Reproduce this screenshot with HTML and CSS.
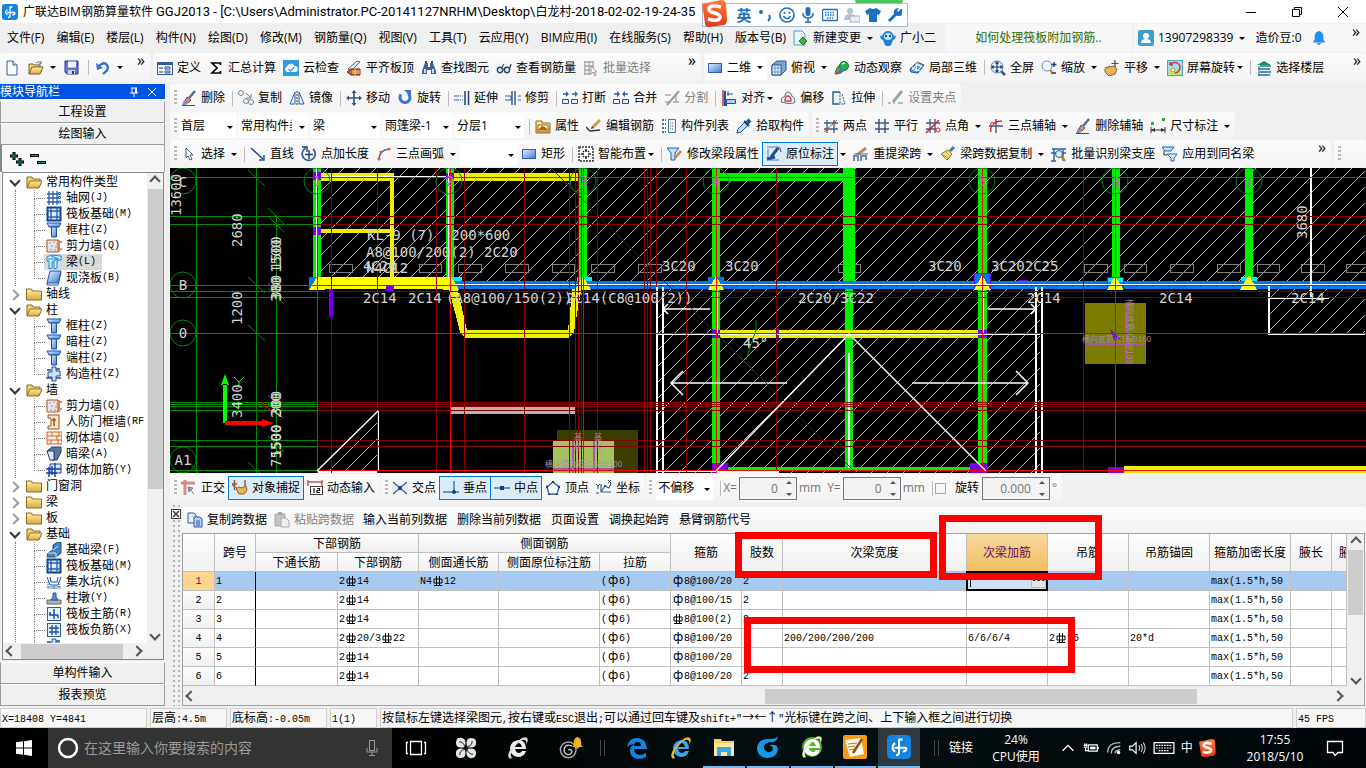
FILE: index.html
```html
<!DOCTYPE html>
<html lang="zh-CN">
<head>
<meta charset="utf-8">
<title>广联达BIM钢筋算量软件 GGJ2013</title>
<link rel="stylesheet" href="styles.css">
</head>
<body>
<svg class="defs" aria-hidden="true">
<defs>
<linearGradient id="g-blue" x1="0" y1="0" x2="1" y2="1"><stop offset="0" stop-color="#e4efff"/><stop offset="1" stop-color="#3f79d8"/></linearGradient>
<linearGradient id="g-gold" x1="0" y1="0" x2="0" y2="1"><stop offset="0" stop-color="#fff0b0"/><stop offset="1" stop-color="#e0a53a"/></linearGradient>
<linearGradient id="g-red" x1="0" y1="0" x2="0" y2="1"><stop offset="0" stop-color="#ff7a3c"/><stop offset="1" stop-color="#e23a14"/></linearGradient>
<symbol id="logo" viewBox="0 0 16 16"><rect width="16" height="16" rx="3" fill="#1583e0"/><path d="M8 2.500v9q0 2-2 2M8 3h2.500M13 8.500H5M5.500 5.500a3 3 0 0 0 0 5.500M13 8.500q0 2.500-2.500 2.500" fill="none" stroke="#fff" stroke-width="1.300"/></symbol>
<symbol id="i-new" viewBox="0 0 16 16"><path d="M3 1h6l4 4v10H3z" fill="#f8fbff" stroke="#3c5f94"/><path d="M9 1v4h4" fill="#cfe0f7" stroke="#3c5f94"/></symbol>
<symbol id="i-open" viewBox="0 0 16 16"><path d="M1 14V4h4l1 1h6v3" fill="#f6d676" stroke="#7a6024"/><path d="M1 14l3-7h11l-3 7z" fill="url(#g-gold)" stroke="#7a6024"/><path d="M8 3q3-3 5 0m0-2v3h-3" fill="none" stroke="#5577a0"/></symbol>
<symbol id="i-save" viewBox="0 0 16 16"><path d="M1 1h13v13H3l-2-2z" fill="#6a72d8" stroke="#30368f"/><rect x="4" y="1.500" width="8" height="6" fill="#f2f4ff"/><rect x="4" y="10" width="7" height="4" fill="#cfd3e4"/><rect x="8" y="11" width="2" height="3" fill="#30368f"/></symbol>
<symbol id="i-undo" viewBox="0 0 16 16"><path d="M4 6q5-5 8-1t-4 9" fill="none" stroke="#3f6fd0" stroke-width="2.500"/><path d="M1 3l1 7 6-2z" fill="#3f6fd0"/></symbol>
<symbol id="i-def" viewBox="0 0 16 16"><rect x=".5" y="2.500" width="15" height="12" fill="#f2f7ff" stroke="#2f5aa8"/><path d="M1 4h14" stroke="#2f5aa8" stroke-width="2"/><path d="M2 8h4M2 12h4" stroke="#333"/><path d="M8 7h5v2H8zM8 11h5v2H8z" fill="#bcd4f8" stroke="#2f5aa8"/></symbol>
<symbol id="i-sum" viewBox="0 0 16 16"><path d="M12.500 5V3H4l5 5-5 5h8.500v-2" fill="none" stroke="#000" stroke-width="1.700"/></symbol>
<symbol id="i-cloud" viewBox="0 0 16 16"><rect width="16" height="16" fill="#2d9be0"/><path d="M4 12a3 3 0 0 1 0-5.500A4 4 0 0 1 11.500 6 3 3 0 0 1 12 12z" fill="#fff"/><path d="M5.500 9l2 2 4-4" fill="none" stroke="#2d9be0" stroke-width="1.300"/></symbol>
<symbol id="i-top" viewBox="0 0 16 16"><path d="M2 9l9-8 3 1-8 8z" fill="#dfe9f8" stroke="#47648f"/><path d="M1 12l4-3h9v6H5z" fill="#c75a24" stroke="#7b2c10"/><path d="M6 11h8M6 13h8M9 9v6" stroke="#ffd48a"/></symbol>
<symbol id="i-bino" viewBox="0 0 16 16"><path d="M4 3h3v4h2V3h3l3 8v3h-5v-4H6v4H1v-3z" fill="#3f6290"/><path d="M4 1h2v2H4zM10 1h2v2h-2z" fill="#274468"/><path d="M3 9h2v4H3zM11 9h2v4h-2z" fill="#c5daf3"/></symbol>
<symbol id="i-glass" viewBox="0 0 16 16"><circle cx="4" cy="10" r="2.700" fill="#d5e4f2" stroke="#33435c" stroke-width="1.400"/><circle cx="11" cy="10" r="2.700" fill="#d5e4f2" stroke="#33435c" stroke-width="1.400"/><path d="M6.500 9h2M13.500 9l1.500-5M6 7l2-3" stroke="#33435c" stroke-width="1.200"/></symbol>
<symbol id="i-batch" viewBox="0 0 16 16"><path d="M1 2h10M1 6h10M1 10h7M1 14h7M2 1v14M6 1v14M10 1v7" stroke="#a8a8a8" stroke-width="1.300"/><path d="M8 6l6 6h-3l2 3-1 1-2-4-2 2z" fill="#fff" stroke="#9a9a9a"/></symbol>
<symbol id="i-rect" viewBox="0 0 16 16"><rect x="1.500" y="3.500" width="13" height="9" fill="url(#g-blue)" stroke="#2f5db2"/></symbol>
<symbol id="i-cube" viewBox="0 0 16 16"><path d="M1 5l5-4h9v9l-5 5H1z" fill="#7aa9d8" stroke="#2f5580"/><path d="M1 5h9v10H1z" fill="#e6f1fc" stroke="#2f5580"/><path d="M10 5l5-4M4 5v10M7 5v10M1 8h9M1 12h9" stroke="#6f98c4"/></symbol>
<symbol id="i-orbit" viewBox="0 0 16 16"><path d="M1 14Q2 6 9 3l3 6Q7 14 1 14z" fill="#6aa04a" stroke="#2f6f2a"/><circle cx="10" cy="6" r="4.500" fill="#22b04a" stroke="#187030"/><path d="M8 4l3-1" stroke="#d8ffd8" stroke-width="1.500"/><path d="M2 14l5-6 4 2-5 4z" fill="#4a73c0"/><circle cx="3" cy="13" r="1.500" fill="#d84422"/></symbol>
<symbol id="i-part" viewBox="0 0 16 16"><path d="M1 9l7-7 7 3-6 8-7-1z" fill="#5c9ac8" stroke="#1f5580"/><path d="M3 9l6-5 4 2-5 5zM8 2l-1 9M3 7l8 4M6 4l7 3" fill="none" stroke="#e8f4ff"/></symbol>
<symbol id="i-full" viewBox="0 0 16 16"><path d="M11 11l4 4" stroke="#2f5580" stroke-width="2.500"/><circle cx="7" cy="7" r="6" fill="#e8f2ff" stroke="#55779f"/><path d="M7 2v10M2 7h10M5.500 3.500L7 2l1.500 1.500M5.500 10.500L7 12l1.500-1.500M3.500 5.500L2 7l1.500 1.500M10.500 5.500L12 7l-1.500 1.500" fill="none" stroke="#16417a" stroke-width="1.200"/></symbol>
<symbol id="i-zoom" viewBox="0 0 16 16"><path d="M9 10l3 4" stroke="#c08a3a" stroke-width="2.500"/><circle cx="6" cy="6" r="5" fill="#eef6ff" stroke="#708caf"/><path d="M13 2v5M10.500 4.500h5M11 13h4" stroke="#16417a" stroke-width="1.400"/></symbol>
<symbol id="i-pan" viewBox="0 0 16 16"><path d="M1 9l1-2 2 1 1-2 2 1 1-1 3 1 2 2-2 5-6 2-4-4z" fill="#e3b45b" stroke="#8d6420"/><path d="M11 0v7M7.500 3.500h7" stroke="#34506f" stroke-width="1.200"/></symbol>
<symbol id="i-rots" viewBox="0 0 16 16"><rect x=".5" y=".5" width="15" height="15" fill="#9fe0f4" stroke="#4aa4cc"/><path d="M1 9l7 1 7-2v7H1z" fill="#bde28a"/><path d="M3 5a5.500 5.500 0 0 1 10 2 5.500 5.500 0 0 1-5 6M3 5V2M3 5h3" fill="none" stroke="#d83030" stroke-width="1.500"/><circle cx="6" cy="10" r="2" fill="#fff3c0" stroke="#c89a3c"/></symbol>
<symbol id="i-floor" viewBox="0 0 16 16"><path d="M1 5l7-4 7 4z" fill="#1d8b62"/><path d="M4 6h11M2 9h12M4 12h11M2 15h12" stroke="#24719b" stroke-width="1.700"/><path d="M3 6v10" stroke="#24719b"/></symbol>
<symbol id="i-brush" viewBox="0 0 16 16"><path d="M14 1L8 8" stroke="#4d6ba0" stroke-width="2.500"/><path d="M6 7l4 3-3 3-3-2z" fill="#e08a7a" stroke="#7d4a44"/><path d="M3 10l4 3-2 2H1z" fill="#7d96c4"/><path d="M1 15.500h13" stroke="#33527f"/></symbol>
<symbol id="i-copy" viewBox="0 0 16 16"><circle cx="3" cy="3" r="2.500" fill="#fff" stroke="#6d7d95"/><circle cx="8" cy="11" r="2.500" fill="#fff" stroke="#6d7d95"/><circle cx="13" cy="12" r="2.500" fill="#fff" stroke="#6d7d95"/><path d="M8 3l5 5M13 4v4H9" fill="none" stroke="#6d7d95"/></symbol>
<symbol id="i-mirror" viewBox="0 0 16 16"><path d="M6 2v12H1zM10 2v12h5z" fill="#e8f1ff" stroke="#2f5db2"/><path d="M8 1v14" stroke="#333" stroke-dasharray="2 1"/></symbol>
<symbol id="i-move" viewBox="0 0 16 16"><path d="M8 2v12M2 8h12" stroke="#35507e" stroke-width="1.600"/><path d="M8 0l2.500 3h-5zM8 16l2.500-3h-5zM0 8l3-2.500v5zM16 8l-3-2.500v5z" fill="#35507e"/></symbol>
<symbol id="i-rot" viewBox="0 0 16 16"><path d="M4 4.500a5 5 0 1 0 7-1" fill="none" stroke="#3f74cc" stroke-width="3"/><path d="M7 0h7v7z" fill="#3f74cc"/></symbol>
<symbol id="i-ext" viewBox="0 0 16 16"><path d="M0 6h9M0 10h9" stroke="#2f62b8" stroke-dasharray="5 1 1 1"/><path d="M11 1v14M14.500 1v14" stroke="#1f3f74" stroke-width="1.500"/></symbol>
<symbol id="i-trim" viewBox="0 0 16 16"><path d="M0 6h6v4H0M16 6h-3M16 10h-3" fill="none" stroke="#2f62b8"/><path d="M7 1v14M10 1v14" stroke="#35507e" stroke-width="1.400"/></symbol>
<symbol id="i-break" viewBox="0 0 16 16"><path d="M1 4h5M10 4h5" stroke="#2f5db2" stroke-width="1.500"/><path d="M7 4L4 1v6zM16 4l-3-3v6z" fill="#2f5db2"/><path d="M.500 9.500h6v4h-6zM9.500 9.500h6v4h-6z" fill="#e4edf9" stroke="#35507e"/></symbol>
<symbol id="i-join" viewBox="0 0 16 16"><path d="M1 4h4M11 4h4" stroke="#2f5db2" stroke-width="1.500"/><path d="M7 4L4 1v6zM9 4l3-3v6z" fill="#2f5db2"/><path d="M.500 9.500h6v4h-6zM9.500 9.500h6v4h-6z" fill="#e4edf9" stroke="#35507e"/></symbol>
<symbol id="i-split" viewBox="0 0 16 16"><path d="M1 5h6M1 12h5M9 12h6M12 5v7" fill="none" stroke="#aaa" stroke-width="1.400"/><path d="M3 15L15 1" stroke="#999" stroke-width="2"/></symbol>
<symbol id="i-align" viewBox="0 0 16 16"><path d="M2 0v16" stroke="#d03030" stroke-width="1.500"/><path d="M4 1v14h2" fill="none" stroke="#1f4f9c" stroke-width="2"/><path d="M6 4h6M7 1v5" stroke="#1f4f9c"/><path d="M5.500 9.500h9v4h-9z" fill="#aecaf5" stroke="#1f4f9c"/></symbol>
<symbol id="i-off" viewBox="0 0 16 16"><path d="M1 12q0-5 4-6 0-4 3-4t4 4q3 2 3 6-3 3-14 0z" fill="#eef3fa" stroke="#5c6f88"/><path d="M5 11q0-5 3-5t3 5z" fill="#fff" stroke="#d84040" stroke-width="1.400"/></symbol>
<symbol id="i-str" viewBox="0 0 16 16"><path d="M9 2H2v12h6" fill="#eaf2ff" stroke="#2f5580" stroke-width="1.400"/><path d="M9 2v12M11 4l3 10H8" fill="none" stroke="#2f5580" stroke-dasharray="2 1"/></symbol>
<symbol id="i-grip" viewBox="0 0 16 16"><path d="M0 13h3M5 13h2M10 13h5" stroke="#aaa" stroke-width="1.500"/><path d="M5 12L14 1" stroke="#a3a3a3" stroke-width="3"/></symbol>
<symbol id="i-prop" viewBox="0 0 16 16"><path d="M1 3h6v2h8v10H1z" fill="url(#g-gold)" stroke="#9d681c"/><path d="M3 7h10v6H3z" fill="#fff8e0" stroke="#9d681c"/><path d="M3 12l4-4 3 1 3 3" fill="#a56422"/></symbol>
<symbol id="i-edit" viewBox="0 0 16 16"><path d="M7 9L14 2" stroke="#d29b4c" stroke-width="3"/><path d="M0 9l4 4 10-1" fill="none" stroke="#333" stroke-width="1.300"/><path d="M5 11l1-3 2 2z" fill="#333"/></symbol>
<symbol id="i-list" viewBox="0 0 16 16"><path d="M1 2h4M1 6h4M1 10h4M1 14h4" stroke="#556f96" stroke-width="2" stroke-dasharray="2 1"/><path d="M7.500 1.500h7v13h-7z" fill="#f2f7ff" stroke="#556f96"/><path d="M9 5h4M9 8h4M9 11h4" stroke="#2f5db2" stroke-dasharray="1 1"/></symbol>
<symbol id="i-pick" viewBox="0 0 16 16"><path d="M1 15l1-4 7-7 3 3-7 7z" fill="#bfe0fb" stroke="#23558f"/><path d="M8 3l5 5" stroke="#0e3a70" stroke-width="2"/><path d="M11 5l3-3" stroke="#1f5aa8" stroke-width="4"/></symbol>
<symbol id="i-two" viewBox="0 0 16 16"><path d="M4 2v13M11 2v13M1 5h14M1 11h14" stroke="#3f5688" stroke-width="1.300"/><path d="M1 14L14 2" stroke="#2a9a3a"/><circle cx="4" cy="11" r="1.500" fill="#d33"/><circle cx="11" cy="5" r="1.500" fill="#d33"/></symbol>
<symbol id="i-par" viewBox="0 0 16 16"><path d="M5 1v14M11 1v14M1 5h14M1 11h14" stroke="#3f5688" stroke-width="1.500"/></symbol>
<symbol id="i-ang" viewBox="0 0 16 16"><path d="M5 1v14M10 1v14M1 5h14M1 11h10" stroke="#3f5688" stroke-width="1.300"/><path d="M1 15L14 2" stroke="#d22" stroke-width="1.400"/><circle cx="13" cy="12" r="2" fill="none" stroke="#d22"/></symbol>
<symbol id="i-arc" viewBox="0 0 16 16"><path d="M8 1v14M1 8h14" stroke="#3f5688" stroke-width="1.400"/><path d="M3 14Q1 4 14 3" fill="none" stroke="#d22" stroke-width="1.400"/><circle cx="4" cy="6" r="1.500" fill="#fff" stroke="#d22"/></symbol>
<symbol id="i-dim" viewBox="0 0 16 16"><path d="M1 9v6M15 9v6M1 12h14" stroke="#333"/><path d="M5 10v4l-4-2zM11 10v4l4-2z" fill="#333"/><rect x="1" y="4" width="3" height="3" fill="#2ea84a"/><rect x="12" y="0" width="3" height="3" fill="#2ea84a"/></symbol>
<symbol id="i-sel" viewBox="0 0 16 16"><path d="M5 2v10l2-2 2 4 2-1-2-4h3z" fill="#fff" stroke="#45607f"/></symbol>
<symbol id="i-line" viewBox="0 0 16 16"><path d="M1 2l12 11" stroke="#23518f" stroke-width="1.600"/><path d="M14 9v5H9" fill="none" stroke="#23518f" stroke-width="1.400"/></symbol>
<symbol id="i-ptlen" viewBox="0 0 16 16"><path d="M5 2a6.500 6.500 0 1 0 7 1" fill="none" stroke="#3f5f90" stroke-width="1.800"/><path d="M8 4v9M4 8.500h8M1 1h5v5" fill="none" stroke="#1f3f6f" stroke-width="1.400"/></symbol>
<symbol id="i-arc3" viewBox="0 0 16 16"><path d="M3 14Q3 4 13 3" fill="none" stroke="#2f6dc0" stroke-width="1.500"/><circle cx="3" cy="13" r="1.600" fill="#e55c3a"/><circle cx="5" cy="6" r="1.600" fill="#e55c3a"/><circle cx="13" cy="3" r="1.600" fill="#e55c3a"/></symbol>
<symbol id="i-smart" viewBox="0 0 16 16"><rect x="1" y="1" width="14" height="14" fill="#fff" stroke="#333" stroke-width="1.500" stroke-dasharray="2 1"/><path d="M8 3v3M8 10v3M3 8h3M10 8h3M5 5l1 1M11 5l-1 1M5 11l1-1M11 11l-1-1" stroke="#222" stroke-width="1.600"/></symbol>
<symbol id="i-seg" viewBox="0 0 16 16"><path d="M0 2h12l-4 5v7H4V7z" fill="#bfe2ff" stroke="#1c62b4"/><path d="M8 12l6-7" stroke="#c98a3c" stroke-width="2.600"/></symbol>
<symbol id="i-mark" viewBox="0 0 16 16"><path d="M1 1h12M2 3v11h11" fill="none" stroke="#98b4dd" stroke-width="2"/><path d="M1 13l8-2M5 11l7-9" stroke="#244f91" stroke-width="3"/><path d="M12 2h2l1 4" fill="none" stroke="#244f91"/></symbol>
<symbol id="i-redo" viewBox="0 0 16 16"><path d="M1 15v-5h4v5M8 15v-5h5v4" fill="none" stroke="#708bb4" stroke-width="2"/><path d="M4 9l9-7" stroke="#c0905a" stroke-width="3"/><path d="M1 8h14" stroke="#4d6a93"/></symbol>
<symbol id="i-paint" viewBox="0 0 16 16"><path d="M10 5l4-4" stroke="#5374a5" stroke-width="3"/><path d="M1 8l7-4 4 4-5 6z" fill="#f6e28b" stroke="#8a7425"/><path d="M3 9l5 3M6 6l4 4" stroke="#b9972f"/></symbol>
<symbol id="i-ident" viewBox="0 0 16 16"><path d="M1 3h14M0 7h15M3 3v12M12 3v12M0 15h5" stroke="#2e609d" stroke-width="1.400"/><path d="M10 10l4 5" stroke="#b98339" stroke-width="2.500"/><circle cx="8" cy="8" r="3.500" fill="#d9ecff" stroke="#335c8b"/></symbol>
<symbol id="i-apply" viewBox="0 0 16 16"><path d="M0 1h12l-3 4H3z" fill="#bfe2ff" stroke="#1c62b4"/><path d="M5 8h10l-3 4v3H9v-3z" fill="#eaf4ff" stroke="#1c62b4"/><path d="M2 5v4h3" fill="none" stroke="#333"/></symbol>
<symbol id="i-ortho" viewBox="0 0 16 16"><path d="M0 3h14M4 0v15" stroke="#d98a84" stroke-width="3"/><path d="M7 7l6 7M7 7l1 5 4-4z" fill="#9fb4cc" stroke="#6d7f94"/></symbol>
<symbol id="i-snap" viewBox="0 0 16 16"><path d="M0 4h5M2.500 0v10M13 0v8" stroke="#9d4a44" stroke-width="1.400"/><path d="M4 9l3-2 3 1 4-2 1 4-3 4H7z" fill="#e8b654" stroke="#8d6420"/><path d="M0 5l5 3" stroke="#9d4a44"/></symbol>
<symbol id="i-dyn" viewBox="0 0 16 16"><path d="M0 2h16M1 0v6M15 0v6" stroke="#b05a55" stroke-width="1.300"/><rect x="3.500" y="6.500" width="12" height="8" fill="#fff" stroke="#444"/><path d="M7 8v5M10 8.500h2.500v2H10v2h3" fill="none" stroke="#111" stroke-width="1.200"/></symbol>
<symbol id="i-x" viewBox="0 0 16 16"><path d="M1 2l14 12M15 2L1 14" stroke="#2f6099" stroke-width="1.300"/><circle cx="8" cy="8" r="2" fill="#153e86"/></symbol>
<symbol id="i-perp" viewBox="0 0 16 16"><path d="M11 1v11M0 12h16" stroke="#3b78b8" stroke-width="1.500"/><circle cx="11" cy="12" r="2" fill="#153e86"/></symbol>
<symbol id="i-mid" viewBox="0 0 16 16"><path d="M0 8h16" stroke="#3b78b8" stroke-width="1.500"/><rect x="6" y="6" width="4" height="4" fill="#153e86"/></symbol>
<symbol id="i-vert" viewBox="0 0 16 16"><path d="M8 2l6 5-2 7H4L2 7z" fill="#fff" stroke="#2f6099" stroke-width="1.300"/><path d="M8 1v2M13 7h2M1 7h2M4 14v1M12 14v1" stroke="#153e86" stroke-width="2.500"/></symbol>
<symbol id="i-coord" viewBox="0 0 16 16"><path d="M5 4v8h10M5 12l4-6 4 2 2-5" fill="none" stroke="#2f6099" stroke-width="1.200"/><path d="M0 4l2 2 2-2M2 6v3M12 0l3 3M15 0l-3 3M0 13h3" fill="none" stroke="#345"/><circle cx="9" cy="6" r="1" fill="#153e86"/></symbol>
<symbol id="i-pages" viewBox="0 0 16 16"><path d="M1 1h6l2 2v8H1z" fill="#e4eefc" stroke="#2f5aa8"/><path d="M7 5h6l2 2v8H7z" fill="#b9d2f6" stroke="#2f5aa8"/><path d="M9 9h4M9 11h4M9 13h4" stroke="#2f5aa8"/></symbol>
<symbol id="i-paste" viewBox="0 0 16 16"><path d="M1 2h10v12H1z" fill="#c4c4c4" stroke="#aaa"/><path d="M4 0h4v3H4z" fill="#a5a5a5"/><path d="M7 6h5l3 3v6H7z" fill="#eee" stroke="#aaa"/></symbol>
<symbol id="i-doc" viewBox="0 0 16 16"><path d="M1 1h8l3 3v11H1z" fill="#eaf6ff" stroke="#4a9aca"/><path d="M10 7l4 4-4 4-4-4z" fill="#3fae3c" stroke="#237a28"/></symbol>
<symbol id="i-mascot" viewBox="0 0 16 16"><path d="M2 6q-3-1-1 3l2 1q1 4 3 6h4q2-2 3-6l2-1q2-4-1-3Q12 1 8 1T2 6z" fill="#1b87d8"/><path d="M4 6q1-3 4-3t4 3q0 4-4 4T4 6z" fill="#bfe8ff"/><circle cx="6" cy="6" r="1" fill="#123"/><circle cx="10" cy="6" r="1" fill="#123"/></symbol>
<symbol id="i-user" viewBox="0 0 16 16"><rect width="16" height="16" rx="2" fill="#3d9fd2"/><circle cx="8" cy="6" r="3" fill="#fff"/><path d="M3 13q0-4 5-4t5 4z" fill="#fff"/></symbol>
<symbol id="i-bell" viewBox="0 0 16 16"><path d="M8 0q5 1 5 7v3l2 3H1l2-3V7q0-6 5-7z" fill="#1e8fff"/><path d="M5 14h6l-3 2z" fill="#1e6fd0"/></symbol>
<symbol id="t-fo" viewBox="0 0 16 16"><path d="M1 14V3h5l1 2h7v3" fill="#f7d36c" stroke="#8a6d1c"/><path d="M1 14l3-7h12l-3 7z" fill="url(#g-gold)" stroke="#8a6d1c"/></symbol>
<symbol id="t-fc" viewBox="0 0 16 16"><path d="M.500 3h5l1 2h9v9H.5z" fill="url(#g-gold)" stroke="#8a6d1c"/></symbol>
<symbol id="t-grid" viewBox="0 0 16 16"><path d="M3 1v14M7 1v14M11 1v14M1 4h12M1 8h12M1 12h12" stroke="#2c5cae" stroke-width="1.300"/><path d="M12.500 2.500h2v2h-2zM12.500 6.500h2v2h-2zM12.500 11h2v2h-2z" fill="#fff" stroke="#2c5cae"/></symbol>
<symbol id="t-raft" viewBox="0 0 16 16"><rect x="1.500" y="1.500" width="13" height="13" fill="#dcebff" stroke="#123f80" stroke-width="2"/><path d="M5 1v14M11 1v14M1 5h14M1 11h14" stroke="#2860b0" stroke-width="1.400"/></symbol>
<symbol id="t-col" viewBox="0 0 16 16"><path d="M1 1h14l-2 4H3z" fill="url(#g-blue)" stroke="#194f9c"/><path d="M5.500 5h5v10h-5z" fill="url(#g-blue)" stroke="#194f9c"/></symbol>
<symbol id="t-wall" viewBox="0 0 16 16"><path d="M1 2h11v12H1z" fill="#e7e3df" stroke="#a55430"/><path d="M3 5h2M7 4h2M5 8h2M9 9h2M4 12h2M8 12h2M10 6h1" stroke="#99a"/><path d="M13 2v12M14 4h2M14 11h2" stroke="#d06a28" stroke-width="1.500"/></symbol>
<symbol id="t-beam" viewBox="0 0 16 16"><path d="M1 3l4-2 10 1v4l-4 1v7l-3 1V8H6v6l-3 1V7H1z" fill="#d7efff" stroke="#1688d0"/><path d="M2 5l10 0M5 2l8 3M6 8l6-3" stroke="#1688d0"/></symbol>
<symbol id="t-slab" viewBox="0 0 16 16"><path d="M4 1h11l-3 12H1z" fill="url(#g-blue)" stroke="#23569c"/><path d="M1 13v2h11l3-12" fill="none" stroke="#23569c"/></symbol>
<symbol id="t-ctor" viewBox="0 0 16 16"><path d="M6 1h4v4h4v5h-4v5H6v-4H2V6h4z" fill="#cfe1fa" stroke="#1c4f96"/><path d="M1 4h4M10 3h4M0 12h6M10 12h5" stroke="#1c4f96" stroke-width="1.500"/></symbol>
<symbol id="t-door" viewBox="0 0 16 16"><path d="M2 1h11v14H2v-3h3V4H2z" fill="#ffe8d0" stroke="#a84a18"/><path d="M8 4v8M6 6h4" stroke="#a84a18" stroke-width="1.500"/></symbol>
<symbol id="t-brick" viewBox="0 0 16 16"><path d="M1 2h15v12H1z" fill="#fff0e0" stroke="#d2642c"/><path d="M1 6h15M1 10h15M6 2v4M11 6v4M5 10v4M12 10v4M13 2v4" stroke="#d2642c"/></symbol>
<symbol id="t-hid" viewBox="0 0 16 16"><path d="M1 5l5-4h9v5l-4 8H5z" fill="#55779f" stroke="#203f6f"/><path d="M1 5h7v9H4z" fill="#dfeaff" stroke="#203f6f"/></symbol>
<symbol id="t-reb" viewBox="0 0 16 16"><path d="M4 2h11v9H4z" fill="#e3ecff" stroke="#163f9c"/><path d="M0 7h15M0 11h11M3 5v10M9 1v14M6 4v9" stroke="#163f9c" stroke-width="1.400"/></symbol>
<symbol id="t-fbeam" viewBox="0 0 16 16"><path d="M2 11l5-3V3l5-3h3v11l-5 4H1z" fill="#3e83bd" stroke="#184f7f"/><path d="M7 8l5-4M2 11h8v4" stroke="#d3ecff" fill="none"/></symbol>
<symbol id="t-pit" viewBox="0 0 16 16"><path d="M1 3l3 8h8l3-8M4 3l1 5h6l1-5" fill="none" stroke="#174f9c"/><path d="M1 12h14v3H1z" fill="#a8c3df"/><path d="M2 8v6M8 12v3M13 8v6" stroke="#174f9c" stroke-dasharray="1 1"/></symbol>
<symbol id="t-pier" viewBox="0 0 16 16"><path d="M1 10h14v4H1z" fill="#b5b5b5" stroke="#666"/><path d="M5 10l2-3V3h3v4l2 3z" fill="#4f93dd" stroke="#23569c"/></symbol>
<symbol id="t-bar" viewBox="0 0 16 16"><rect x="1.500" y="1.500" width="13" height="13" fill="#e6f1ff" stroke="#2860b0"/><path d="M3 9h9M8 3v10M4 6v3M12 9v3" stroke="#174f9c" stroke-width="1.500"/></symbol>
<symbol id="t-bar2" viewBox="0 0 16 16"><rect x="1.500" y="1.500" width="13" height="13" fill="#e6f1ff" stroke="#2860b0"/><path d="M3 6h10M3 10h10M6 3v10M10 3v10" stroke="#174f9c" stroke-width="1.300"/></symbol>
<symbol id="k-rib" viewBox="0 0 12 12"><path d="M2 4h8v4H2zM4.500 1v10M7.500 1v10" fill="none" stroke="#000"/><path d="M2 10.500h8" stroke="#000"/></symbol>
<symbol id="k-edge" viewBox="0 0 24 24"><path d="M2 11Q4 2 12 2q9 0 10 11H9q0 5 5 6 3 0 7-2v4q-4 2-8 2-8-1-8-9 0-4 5-6-5 0-8 3zM9 10h7q0-4-3.500-4T9 10z" fill="#1583e0"/></symbol>
<symbol id="k-ie" viewBox="0 0 24 24"><path d="M12 4q8 0 8 9H9q1 4 4 4 2 0 3-2h4q-2 6-8 6-8-1-8-9 1-7 8-8zM9 11h7q-1-4-4-4-2 1-3 4z" fill="currentColor"/><path d="M3 22Q0 18 8 9 17-1 21 2q2 2-1 7 1-4-1-5-3-1-8 4Q2 17 6 22q-2 1-3 0z" fill="var(--ring)"/></symbol>
</defs>
</svg>

<header class="titlebar">
  <svg class="ic"><use href="#logo"/></svg>
  <h1>广联达BIM钢筋算量软件 <span>GGJ2013 - [C:\Users\Administrator.PC-20141127NRHM\Desktop\</span>白龙村<span>-2018-02-02-19-24-35</span></h1>
  <div class="winctl">
    <button aria-label="最小化"><svg viewBox="0 0 12 12"><path d="M1 6.500h10" stroke="#000"/></svg></button>
    <button aria-label="还原"><svg viewBox="0 0 12 12"><path d="M1.500 3.500h7v7h-7zM3.500 3V1.500h7v7H9" fill="none" stroke="#000"/></svg></button>
    <button aria-label="关闭"><svg viewBox="0 0 12 12"><path d="M1 1l10 10M11 1L1 11" stroke="#000"/></svg></button>
  </div>
  <div class="orb"></div>
  <div class="ime">
    <svg class="sogou" viewBox="0 0 26 27"><path d="M1 4l19-4q4 0 5 3l1 17q0 4-3 5L8 27q-4 0-4-4z" fill="url(#g-red)"/><path d="M20 7q-11-3-12 2 0 3 6 4 6 2 5 5-2 4-12 1" fill="none" stroke="#fff" stroke-width="3.500"/></svg>
    <b>英</b>
    <svg viewBox="0 0 16 16"><circle cx="4" cy="5" r="2" fill="#2b6cb8"/><path d="M12 8q2 3-1 6" fill="none" stroke="#2b6cb8" stroke-width="2"/></svg>
    <svg viewBox="0 0 16 16"><circle cx="8" cy="8" r="7" fill="none" stroke="#1f6fc0" stroke-width="1.600"/><path d="M4.500 9q3.500 5 7 0" fill="none" stroke="#1f6fc0" stroke-width="1.500"/><circle cx="5.500" cy="6" r="1" fill="#1f6fc0"/><circle cx="10.500" cy="6" r="1" fill="#1f6fc0"/></svg>
    <svg viewBox="0 0 16 16"><rect x="5.500" y="0" width="5" height="9" rx="2.500" fill="#1f6fc0"/><path d="M3 6q0 5 5 5t5-5M8 11v4M5 15h6" fill="none" stroke="#1f6fc0" stroke-width="1.500"/></svg>
    <svg viewBox="0 0 16 16"><rect x=".5" y="2.500" width="15" height="11" rx="1" fill="none" stroke="#1f6fc0" stroke-width="1.400"/><path d="M3 5.500h10M3 8h10M5 11h6" stroke="#1f6fc0" stroke-width="1.400" stroke-dasharray="1.500 1"/></svg>
    <svg viewBox="0 0 16 16"><circle cx="6" cy="4" r="3" fill="#b6c2d2"/><path d="M0 13q0-6 6-6 4 0 5 2v4z" fill="#b6c2d2"/><rect x="6" y="9" width="10" height="6" fill="#e9eef5" stroke="#a4b2c6"/></svg>
    <svg viewBox="0 0 16 16"><path d="M5 1q3 2 6 0l5 3-2 4-2-1v8H4V7L2 8 0 4z" fill="#1f6fc0"/></svg>
    <svg viewBox="0 0 16 16"><path d="M2 14l7-7" stroke="#1f6fc0" stroke-width="3"/><path d="M14 2l-3 3-1-1 2-3q-4 0-5 3t1 4 5 1 2-7z" fill="#1f6fc0"/></svg>
  </div>
</header>

<nav class="menubar">
  <div class="menus">
    <button>文件(F)</button><button>编辑(E)</button><button>楼层(L)</button><button>构件(N)</button><button>绘图(D)</button><button>修改(M)</button><button>钢筋量(Q)</button><button>视图(V)</button><button>工具(T)</button><button>云应用(Y)</button><button>BIM应用(I)</button><button>在线服务(S)</button><button>帮助(H)</button><button>版本号(B)</button>
  </div>
  <div class="extras">
    <button class="tb drop"><svg class="ic"><use href="#i-doc"/></svg>新建变更</button>
    <button class="tb"><svg class="ic"><use href="#i-mascot"/></svg>广小二</button>
  </div>
  <a class="tip" href="#">如何处理筏板附加钢筋..</a>
  <div class="account">
    <button class="tb drop"><svg class="ic"><use href="#i-user"/></svg>13907298339</button>
    <span>造价豆:0</span>
    <button aria-label="通知"><svg class="bell"><use href="#i-bell"/></svg></button>
    <button class="more" aria-label="更多">»</button>
  </div>
</nav>

<div class="toolrow first">
  <div class="bar file">
    <button aria-label="新建"><svg class="ic"><use href="#i-new"/></svg></button>
    <button class="drop" aria-label="打开"><svg class="ic"><use href="#i-open"/></svg></button>
    <button aria-label="保存"><svg class="ic"><use href="#i-save"/></svg></button>
    <i class="sep"></i>
    <button class="drop" aria-label="撤销"><svg class="ic"><use href="#i-undo"/></svg></button>
    <button class="more" aria-label="更多">»</button>
  </div>
  <div class="bar calc">
    <button class="tb"><svg class="ic"><use href="#i-def"/></svg>定义</button>
    <button class="tb"><svg class="ic"><use href="#i-sum"/></svg>汇总计算</button>
    <button class="tb"><svg class="ic"><use href="#i-cloud"/></svg>云检查</button>
    <button class="tb"><svg class="ic"><use href="#i-top"/></svg>平齐板顶</button>
    <button class="tb"><svg class="ic"><use href="#i-bino"/></svg>查找图元</button>
    <button class="tb"><svg class="ic"><use href="#i-glass"/></svg>查看钢筋量</button>
    <button class="tb off" disabled><svg class="ic"><use href="#i-batch"/></svg>批量选择</button>
    <button class="more" aria-label="更多">»</button>
  </div>
  <div class="bar view">
    <button class="tb drop white"><svg class="ic"><use href="#i-rect"/></svg>二维</button>
    <button class="tb drop"><svg class="ic"><use href="#i-cube"/></svg>俯视</button>
    <button class="tb"><svg class="ic"><use href="#i-orbit"/></svg>动态观察</button>
    <button class="tb"><svg class="ic"><use href="#i-part"/></svg>局部三维</button>
    <i class="sep"></i>
    <button class="tb"><svg class="ic"><use href="#i-full"/></svg>全屏</button>
    <button class="tb drop"><svg class="ic"><use href="#i-zoom"/></svg>缩放</button>
    <button class="tb drop"><svg class="ic"><use href="#i-pan"/></svg>平移</button>
    <button class="tb drop tight"><svg class="ic"><use href="#i-rots"/></svg>屏幕旋转</button>
    <i class="sep"></i>
    <button class="tb"><svg class="ic"><use href="#i-floor"/></svg>选择楼层</button>
    <button class="more" aria-label="更多">»</button>
  </div>
</div>

<main class="main">
<aside class="side">
  <div class="side-title"><span>模块导航栏</span>
    <button aria-label="固定"><svg viewBox="0 0 10 10"><path d="M2 1h6M3 1v5M6.500 1v5M7.500 1v5M1 6h8M5 6v4" stroke="#fff" fill="none"/></svg></button>
    <button aria-label="关闭"><svg viewBox="0 0 10 10"><path d="M1 1l8 8M9 1L1 9" stroke="#fff"/></svg></button>
  </div>
  <button class="side-btn">工程设置</button>
  <button class="side-btn">绘图输入</button>
  <div class="side-tools">
    <button aria-label="全部展开"><svg viewBox="0 0 18 18"><path d="M6 2v8M2 6h8M12 8v8M8 12h8" stroke="#000" stroke-width="3"/><path d="M6 3v6M3 6h6M12 9v6M9 12h6" stroke="#0a9a86"/></svg></button>
    <button aria-label="全部折叠"><svg viewBox="0 0 18 18"><path d="M1 5.500h9M8 12.500h9" stroke="#000" stroke-width="3"/><path d="M2 5.500h7M9 12.500h7" stroke="#0a9a86"/></svg></button>
  </div>
  <div class="tree">
    <div class="tree-main">
    <ul class="roots">
      <li><div class="node open"><svg class="ic"><use href="#t-fo"/></svg>常用构件类型</div>
        <ul>
          <li><svg class="ic"><use href="#t-grid"/></svg>轴网<s>(J)</s></li>
          <li><svg class="ic"><use href="#t-raft"/></svg>筏板基础<s>(M)</s></li>
          <li><svg class="ic"><use href="#t-col"/></svg>框柱<s>(Z)</s></li>
          <li><svg class="ic"><use href="#t-wall"/></svg>剪力墙<s>(Q)</s></li>
          <li class="on"><svg class="ic"><use href="#t-beam"/></svg>梁<s>(L)</s></li>
          <li><svg class="ic"><use href="#t-slab"/></svg>现浇板<s>(B)</s></li>
        </ul></li>
      <li><div class="node"><svg class="ic"><use href="#t-fc"/></svg>轴线</div></li>
      <li><div class="node open"><svg class="ic"><use href="#t-fo"/></svg>柱</div>
        <ul>
          <li><svg class="ic"><use href="#t-col"/></svg>框柱<s>(Z)</s></li>
          <li><svg class="ic"><use href="#t-col"/></svg>暗柱<s>(Z)</s></li>
          <li><svg class="ic"><use href="#t-col"/></svg>端柱<s>(Z)</s></li>
          <li><svg class="ic"><use href="#t-ctor"/></svg>构造柱<s>(Z)</s></li>
        </ul></li>
      <li><div class="node open"><svg class="ic"><use href="#t-fo"/></svg>墙</div>
        <ul>
          <li><svg class="ic"><use href="#t-wall"/></svg>剪力墙<s>(Q)</s></li>
          <li><svg class="ic"><use href="#t-door"/></svg>人防门框墙<s>(RF</s></li>
          <li><svg class="ic"><use href="#t-brick"/></svg>砌体墙<s>(Q)</s></li>
          <li><svg class="ic"><use href="#t-hid"/></svg>暗梁<s>(A)</s></li>
          <li><svg class="ic"><use href="#t-reb"/></svg>砌体加筋<s>(Y)</s></li>
        </ul></li>
      <li><div class="node"><svg class="ic"><use href="#t-fc"/></svg>门窗洞</div></li>
      <li><div class="node"><svg class="ic"><use href="#t-fc"/></svg>梁</div></li>
      <li><div class="node"><svg class="ic"><use href="#t-fc"/></svg>板</div></li>
      <li><div class="node open"><svg class="ic"><use href="#t-fo"/></svg>基础</div>
        <ul>
          <li><svg class="ic"><use href="#t-fbeam"/></svg>基础梁<s>(F)</s></li>
          <li><svg class="ic"><use href="#t-raft"/></svg>筏板基础<s>(M)</s></li>
          <li><svg class="ic"><use href="#t-pit"/></svg>集水坑<s>(K)</s></li>
          <li><svg class="ic"><use href="#t-pier"/></svg>柱墩<s>(Y)</s></li>
          <li><svg class="ic"><use href="#t-bar"/></svg>筏板主筋<s>(R)</s></li>
          <li><svg class="ic"><use href="#t-bar2"/></svg>筏板负筋<s>(X)</s></li>
          <li><svg class="ic"><use href="#t-ctor"/></svg></li>
        </ul></li>
    </ul>
    <div class="vs"><i class="ch up"></i><b></b><i class="ch down"></i></div>
    </div>
    <div class="hs"><i class="ch left"></i><b></b><i class="ch right"></i></div>
  </div>
  <button class="side-btn">单构件输入</button>
  <button class="side-btn">报表预览</button>
</aside>

<section class="work">
  <div class="toolrow">
    <div class="bar">
      <i class="grip"></i>
      <button class="tb"><svg class="ic"><use href="#i-brush"/></svg>删除</button>
      <i class="sep"></i>
      <button class="tb"><svg class="ic"><use href="#i-copy"/></svg>复制</button>
      <button class="tb"><svg class="ic"><use href="#i-mirror"/></svg>镜像</button>
      <i class="sep"></i>
      <button class="tb"><svg class="ic"><use href="#i-move"/></svg>移动</button>
      <button class="tb"><svg class="ic"><use href="#i-rot"/></svg>旋转</button>
      <i class="sep"></i>
      <button class="tb"><svg class="ic"><use href="#i-ext"/></svg>延伸</button>
      <button class="tb"><svg class="ic"><use href="#i-trim"/></svg>修剪</button>
      <i class="sep"></i>
      <button class="tb"><svg class="ic"><use href="#i-break"/></svg>打断</button>
      <button class="tb"><svg class="ic"><use href="#i-join"/></svg>合并</button>
      <button class="tb off" disabled><svg class="ic"><use href="#i-split"/></svg>分割</button>
      <i class="sep"></i>
      <button class="tb drop tight"><svg class="ic"><use href="#i-align"/></svg>对齐</button>
      <button class="tb"><svg class="ic"><use href="#i-off"/></svg>偏移</button>
      <button class="tb"><svg class="ic"><use href="#i-str"/></svg>拉伸</button>
      <i class="sep"></i>
      <button class="tb off" disabled><svg class="ic"><use href="#i-grip"/></svg>设置夹点</button>
    </div>
  </div>
  <div class="toolrow">
    <div class="bar">
      <i class="grip"></i>
      <div class="combos">
        <label class="combo short"><select aria-label="楼层"><option>首层</option></select></label>
        <label class="combo"><select aria-label="构件类型"><option>常用构件类型</option></select></label>
        <label class="combo"><select aria-label="构件"><option>梁</option></select></label>
        <label class="combo"><select aria-label="构件名称"><option>雨篷梁-1</option></select></label>
        <label class="combo"><select aria-label="分层"><option>分层1</option></select></label>
      </div>
      <i class="sep"></i>
      <button class="tb"><svg class="ic"><use href="#i-prop"/></svg>属性</button>
      <button class="tb"><svg class="ic"><use href="#i-edit"/></svg>编辑钢筋</button>
      <button class="tb"><svg class="ic"><use href="#i-list"/></svg>构件列表</button>
      <button class="tb"><svg class="ic"><use href="#i-pick"/></svg>拾取构件</button>
    </div>
    <div class="bar">
      <i class="grip"></i>
      <button class="tb"><svg class="ic"><use href="#i-two"/></svg>两点</button>
      <button class="tb"><svg class="ic"><use href="#i-par"/></svg>平行</button>
      <button class="tb drop"><svg class="ic"><use href="#i-ang"/></svg>点角</button>
      <button class="tb drop"><svg class="ic"><use href="#i-arc"/></svg>三点辅轴</button>
      <button class="tb"><svg class="ic"><use href="#i-brush"/></svg>删除辅轴</button>
      <button class="tb drop"><svg class="ic"><use href="#i-dim"/></svg>尺寸标注</button>
    </div>
  </div>
  <div class="toolrow">
    <div class="bar grow">
      <i class="grip"></i>
      <button class="tb drop"><svg class="ic"><use href="#i-sel"/></svg>选择</button>
      <i class="sep"></i>
      <button class="tb"><svg class="ic"><use href="#i-line"/></svg>直线</button>
      <button class="tb"><svg class="ic"><use href="#i-ptlen"/></svg>点加长度</button>
      <button class="tb drop"><svg class="ic"><use href="#i-arc3"/></svg>三点画弧</button>
      <label class="combo short inset"><select aria-label="画弧参数"><option></option></select></label>
      <button class="tb"><svg class="ic"><use href="#i-rect"/></svg>矩形</button>
      <i class="sep"></i>
      <button class="tb drop tight"><svg class="ic"><use href="#i-smart"/></svg>智能布置</button>
      <i class="sep"></i>
      <button class="tb"><svg class="ic"><use href="#i-seg"/></svg>修改梁段属性</button>
      <button class="tb drop pressed wide"><svg class="ic"><use href="#i-mark"/></svg>原位标注</button>
      <button class="tb drop"><svg class="ic"><use href="#i-redo"/></svg>重提梁跨</button>
      <button class="tb drop"><svg class="ic"><use href="#i-paint"/></svg>梁跨数据复制</button>
      <button class="tb"><svg class="ic"><use href="#i-ident"/></svg>批量识别梁支座</button>
      <button class="tb"><svg class="ic"><use href="#i-apply"/></svg>应用到同名梁</button>
      <button class="more" aria-label="更多">»</button>
    </div>
    <div class="bar stub"><i class="grip"></i></div>
  </div>

  <svg class="cad" viewBox="170 168 1196 305" preserveAspectRatio="xMinYMin slice" role="img" aria-label="梁平面图">
    <defs>
      <pattern id="hatch" width="16" height="16" patternUnits="userSpaceOnUse"><path d="M0 16L16 0" stroke="#b4b4b4" shape-rendering="crispEdges"/></pattern>
    </defs>
    <rect x="170" y="168" width="1196" height="305" fill="#000"/>
    <g shape-rendering="crispEdges" fill="none">
      <path d="M321 168H1365V281H321zM657 289H1040V473H657zM1269 289H1365V333H1269zM318 470L377 411V470z" fill="url(#hatch)"/>
      <g stroke="#808080"><path d="M329.500 264.500h23v8h-23zM419.500 264.500h22v8h-22zM458.500 264.500h23v8h-23zM505.500 264.500h23v8h-23zM552.500 264.500h22v8h-22zM591.500 264.500h23v8h-23zM638.500 264.500h23v8h-23zM838.500 264.500h22v8h-22zM1084.500 264.500h23v8h-23zM1124.500 264.500h22v8h-22zM1170.500 264.500h23v8h-23zM1217.500 264.500h23v8h-23zM1257.500 264.500h22v8h-22zM1301.500 264.500h23v8h-23zM1346.500 264.500h23v8h-23z"/></g>
      <path d="M557 430h81v43h-81z" fill="#3c3c00"/><path d="M553 441h61v32h-61z" fill="#a5c060"/>
      <path d="M1085 303h61v61h-61z" fill="#7b7b00"/>
      <path d="M1085 344h61M1126 303v61M573 441v32M594 441v32M553 469h61" stroke="#b050a0" stroke-width="2"/>
      <path d="M451 407h124v7H451z" fill="#b4b4b4"/>
      <path d="M313 168h8v112h-8zM446 168h8v113h-8zM579 168h8v113h-8zM712 168h8v302h-8zM843 168h12v113h-12zM845 289h8v181h-8zM978 168h9v302h-9zM1112 168h8v112h-8zM1245 168h8v112h-8zM720 173h123v8H720zM728 467h242v4H728z" fill="#00f000"/>
      <path d="M321 173h73v8h-73zM390 173h4v104h-4zM321 229h71v4h-71zM454 173h125v8H454zM720 330h258v8H720zM1124 466h242v7h-242z" fill="#f0f000"/>
      <path d="M449 289l8-2 10 43h101l5-45h9l-8 47-6 6H465l-5-6z" fill="#f0f000"/>
      <path d="M309 277h10v13h-10zM450 281H1366v8H450z" fill="#0078f0"/>
      <path d="M446 277h16v4h-16zM577 277h15v4h-15zM1107 278h16v4h-16zM1241 277h16v4h-16z" fill="#00f0f0"/>
      <path d="M708 277h16v12h-16zM974 273h17v14h-17z" fill="#0078f0"/>
      <path d="M318 277h134l3 9v3H313z" fill="#ff0"/>
      <path d="M309 290l8-13 8 13zM443 290l8-14 8 14zM575 290l8-14 8 14zM708 290l8-14 8 14zM974 290l8-15 9 15zM1107 290l8-14 9 14zM1240 290l9-15 8 15z" fill="#ff0"/>
      <path d="M974.500 273.500h16v15M974.500 273v15M1107.500 277.500h16v12M1107.500 277v12M1018 280.500h10" stroke="#7800f0"/>
      <path d="M313 172h8v8h-8zM446 173h8v6h-8zM313 227h8v8h-8zM386 286h8v5h-8zM329 289h4v28h-4zM712 330h8v8h-8zM776 329h3v9h-3zM978 330h9v8h-9zM712 463h16v10h-16zM970 463h17v10h-17zM1108 467h16v6h-16zM1110 329l10 10-6 1z" fill="#7800f0"/>
      <path d="M321 176.500h125M583 176.500h3M454 284.500h912M657 334.500h383M657 471.500h63" stroke="#fff"/>
      <path d="M316.500 168v109M448.500 168v110M717.500 289v44M983.500 289v44" stroke="#fff"/>
      <path d="M657 287v186M663 287v186M1036 287v186M1042 287v186M849 353v115M378 411v60M317 472h61M1269 286v48h96M716 472h63" stroke="#fff" stroke-width="2"/>
      <path d="M1311 168v130M1269 298h60" stroke="#fff" stroke-width="2"/>
      <path d="M170 177.500h147M170 216.500h147M170 224.500h147M170 285.500h147M170 291.500h147M170 297.500h147M170 333.500h147M170 402.500h147M170 404.500h147M170 406.500h147M170 410.500h147M170 440.500h147M170 446.500h147M170 470.500h147M196.500 168v305M256.500 168v305M276.500 215v258" stroke="#008c00"/>
      <path d="M317 216.500h1049M317 224.500h1049M317 291.500h1049M317 297.500h1049M317 402.500h1049M317 404.500h1049M317 406.500h1049M317 410.500h1049M317 440.500h1049M317 446.500h1049M331.500 168v305M377.500 168v305M436.500 168v305M464.500 168v305M524.500 168v305M569.500 168v305M575.500 168v305M578.500 168v305M581.500 168v305M597.500 168v305M644.500 168v305M647.500 168v305M650.500 168v305M656.500 168v119M686.500 168v305M776.500 168v302M1083.500 168v302" stroke="#880000"/>
      <path d="M317 177.500h1049M317 285.500h1049M317 333.500h1049M317 470.500h1049M317.500 168v305M450.500 168v305M583.500 168v305M716.500 168v305M982.500 168v305M1115.500 168v302" stroke="#f00"/>
    </g>
    <g fill="none">
      <path d="M317 471l61-60M716 471l133-137 137 137" stroke="#fff" stroke-width="1.400"/>
      <path d="M664 309h46M988 309h48M1031 304l5 5-5 5M668 304l-5 5 5 5M672 383h115M912 383h116M683 371l-12 12 12 12M1016 371l12 12-12 12" stroke="#fff" stroke-width="1.500"/>
      <path d="M551 168l305 305" stroke="#880000"/>
      <path d="M740 357l14 14M756 320v10q-5 14-10 30M248 170l17 16M248 277l17 16M248 325l17 16M248 462l17 16M268 208l16 16M268 216l16 16M268 283l16 16M268 288l16 16M268 395l16 16M268 403l16 16M268 436l16 16M190 463l10 12" stroke="#008c00"/>
      <g stroke="#008020"><circle cx="183" cy="181" r="13"/><circle cx="183" cy="285" r="13"/><circle cx="183" cy="333" r="13"/><circle cx="183" cy="460" r="13"/><circle cx="317" cy="181" r="13"/><circle cx="449" cy="181" r="13"/><circle cx="583" cy="181" r="13"/><circle cx="716" cy="181" r="13"/><circle cx="982" cy="181" r="13"/><circle cx="1115" cy="181" r="13"/><circle cx="1249" cy="181" r="13"/></g>
      <path d="M244 377l-5 5-5-5M239 382v6" stroke="#0f0"/>
      <path d="M223 384h4v39h-4zM225 374l-4 11h8z" fill="#0f0"/>
      <path d="M225 421h38v4h-38zM262 419l12 4-12 4z" fill="#f00"/><path d="M262 402l10 10M272 402l-10 10" stroke="#f00"/>
    </g>
    <g class="cadtext">
      <text x="367" y="240" xml:space="preserve">KL-9 (7)  200*600</text>
      <text x="366" y="257" xml:space="preserve">A8@100/200(2) 2C20</text>
      <text x="366" y="273">N4C12</text><text x="363" y="271">4C20</text>
      <text x="363" y="303">2C14</text><text x="408" y="303">2C14</text>
      <text x="446" y="303">(A8@100/150(2))</text><text x="566" y="303">2C14(C8@100(2))</text>
      <text x="662" y="271">3C20</text><text x="725" y="271">3C20</text><text x="928" y="271">3C20</text><text x="991" y="271">3C202C25</text>
      <text x="798" y="303">2C20/3C22</text><text x="1027" y="303">2C14</text><text x="1159" y="303">2C14</text><text x="1291" y="303">2C14</text>
      <text x="743" y="348">45°</text>
      <text x="183" y="187" class="mid">C</text><text x="183" y="290" class="mid">B</text><text x="183" y="338" class="mid">0</text><text x="183" y="465" class="mid">A1</text>
      <text transform="translate(181 216) rotate(-90)">13600</text>
      <text transform="translate(242 247) rotate(-90)">2680</text>
      <text transform="translate(242 325) rotate(-90)">1200</text>
      <text transform="translate(242 418) rotate(-90)">3400</text>
      <text transform="translate(281 270) rotate(-90)">1500</text><text transform="translate(281 273) rotate(-90)">1500</text>
      <text transform="translate(281 302) rotate(-90)">300</text><text transform="translate(281 300) rotate(-90)">380</text>
      <text transform="translate(281 418) rotate(-90)">200</text><text transform="translate(281 416) rotate(-90)">300</text>
      <text transform="translate(281 467) rotate(-90)">75500</text><text transform="translate(281 458) rotate(-90)">1500</text>
      <text transform="translate(1307 239) rotate(-90)">3680</text>
      <g fill="#c060c8"><text x="317" y="186" class="mid">1</text><text x="450" y="186" class="mid">2</text><text x="584" y="186" class="mid">3</text><text x="716" y="186" class="mid">4</text><text x="982" y="186" class="mid">5</text><text x="1116" y="187" class="mid">6</text><text x="1249" y="187" class="mid">7</text></g>
      <g class="small"><text x="1082" y="342">横向底筋:C18@100</text><text transform="translate(1127 299) rotate(90)">横向底筋:C8@100</text><text x="545" y="467">横向受力筋:C18@100</text><text x="574" y="440">基</text><text x="594" y="440">基</text><text x="574" y="450">底</text><text x="594" y="450">底</text></g>
    </g>
  </svg>

  <div class="toolrow snap">
    <div class="bar">
      <i class="grip"></i>
      <button class="tb"><svg class="ic"><use href="#i-ortho"/></svg>正交</button>
      <button class="tb pressed"><svg class="ic"><use href="#i-snap"/></svg>对象捕捉</button>
      <button class="tb"><svg class="ic"><use href="#i-dyn"/></svg>动态输入</button>
    </div>
    <div class="bar">
      <i class="grip"></i>
      <button class="tb"><svg class="ic"><use href="#i-x"/></svg>交点</button>
      <button class="tb pressed"><svg class="ic"><use href="#i-perp"/></svg>垂点</button>
      <button class="tb pressed"><svg class="ic"><use href="#i-mid"/></svg>中点</button>
      <button class="tb"><svg class="ic"><use href="#i-vert"/></svg>顶点</button>
      <button class="tb"><svg class="ic"><use href="#i-coord"/></svg>坐标</button>
    </div>
    <div class="bar offs">
      <i class="grip"></i>
      <label class="combo short"><select aria-label="偏移方式"><option>不偏移</option></select></label>
      <i class="sep"></i>
      <label class="spin">X=<span><input value="0" disabled></span>mm</label>
      <label class="spin">Y=<span><input value="0" disabled></span>mm</label>
      <i class="sep"></i>
      <label class="rotate"><input type="checkbox">旋转</label>
      <label class="spin big"><span><input value="0.000" aria-label="旋转角度" disabled></span>°</label>
    </div>
  </div>

  <div class="dock">
    <div class="dock-grip"><button aria-label="关闭面板"><svg viewBox="0 0 10 10"><rect x=".5" y=".5" width="9" height="9" fill="#fff" stroke="#444"/><path d="M2 2l6 6M8 2L2 8" stroke="#533" stroke-width="1.500"/></svg></button></div>
    <div class="dock-body">
      <div class="bar spanbar">
        <button class="tb"><svg class="ic"><use href="#i-pages"/></svg>复制跨数据</button>
        <button class="tb off" disabled><svg class="ic"><use href="#i-paste"/></svg>粘贴跨数据</button>
        <button class="tb txt">输入当前列数据</button><button class="tb txt">删除当前列数据</button><button class="tb txt">页面设置</button><button class="tb txt">调换起始跨</button><button class="tb txt">悬臂钢筋代号</button>
      </div>
      <div class="grid">
        <div class="grid-main">
        <div class="grid-clip">
        <table>
          <colgroup><col class="w32"><col class="w41"><col class="w82"><col class="w81"><col class="w80"><col class="w101"><col class="w71"><col class="w71"><col class="w41"><col class="w184"><col class="w81"><col class="w81"><col class="w81"><col class="w81"><col class="w41"><col></colgroup>
          <thead>
            <tr><th rowspan="2"></th><th rowspan="2">跨号</th><th colspan="2">下部钢筋</th><th colspan="3">侧面钢筋</th><th rowspan="2">箍筋</th><th rowspan="2">肢数</th><th rowspan="2">次梁宽度</th><th rowspan="2" class="cur">次梁加筋</th><th rowspan="2">吊筋</th><th rowspan="2">吊筋锚固</th><th rowspan="2">箍筋加密长度</th><th rowspan="2">腋长</th><th rowspan="2" class="cut">腋高</th></tr>
            <tr><th>下通长筋</th><th>下部钢筋</th><th>侧面通长筋</th><th>侧面原位标注筋</th><th>拉筋</th></tr>
          </thead>
          <tbody>
            <tr class="sel"><th>1</th><td>1</td><td></td><td>2<svg class="k"><use href="#k-rib"/></svg>14</td><td>N4<svg class="k"><use href="#k-rib"/></svg>12</td><td></td><td>(<b>ф</b>6)</td><td><b>ф</b>8@100/20</td><td>2</td><td></td><td class="edit"><div><input aria-label="次梁加筋"><button aria-label="更多">···</button></div></td><td></td><td></td><td>max(1.5*h,50</td><td></td><td></td></tr>
            <tr><th>2</th><td>2</td><td></td><td>2<svg class="k"><use href="#k-rib"/></svg>14</td><td></td><td></td><td>(<b>ф</b>6)</td><td><b>ф</b>8@100/15</td><td>2</td><td></td><td></td><td></td><td></td><td>max(1.5*h,50</td><td></td><td></td></tr>
            <tr><th>3</th><td>3</td><td></td><td>2<svg class="k"><use href="#k-rib"/></svg>14</td><td></td><td></td><td>(<b>ф</b>6)</td><td><svg class="k"><use href="#k-rib"/></svg>8@100(2)</td><td>2</td><td></td><td></td><td></td><td></td><td>max(1.5*h,50</td><td></td><td></td></tr>
            <tr><th>4</th><td>4</td><td></td><td>2<svg class="k"><use href="#k-rib"/></svg>20/3<svg class="k"><use href="#k-rib"/></svg>22</td><td></td><td></td><td>(<b>ф</b>6)</td><td><b>ф</b>8@100/20</td><td></td><td>200/200/200/200</td><td>6/6/6/4</td><td>2<svg class="k"><use href="#k-rib"/></svg>16</td><td>20*d</td><td>max(1.5*h,50</td><td></td><td></td></tr>
            <tr><th>5</th><td>5</td><td></td><td>2<svg class="k"><use href="#k-rib"/></svg>14</td><td></td><td></td><td>(<b>ф</b>6)</td><td><b>ф</b>8@100/20</td><td></td><td></td><td></td><td></td><td></td><td>max(1.5*h,50</td><td></td><td></td></tr>
            <tr><th>6</th><td>6</td><td></td><td>2<svg class="k"><use href="#k-rib"/></svg>14</td><td></td><td></td><td>(<b>ф</b>6)</td><td><b>ф</b>8@100/20</td><td>2</td><td></td><td></td><td></td><td></td><td>max(1.5*h,50</td><td></td><td></td></tr>
          </tbody>
        </table>
        </div>
        <div class="vs"><i class="ch up"></i><b></b><i class="ch down"></i></div>
        </div>
        <div class="hs"><i class="ch left"></i><b></b><i class="ch right"></i></div>
      </div>
    </div>
  </div>
</section>
</main>

<footer class="status">
  <span class="s1"><s>X=18408 Y=4841</s></span><span class="s2">层高<s>:4.5m</s></span><span class="s3">底标高<s>:-0.05m</s></span><span class="s4"><s>1(1)</s></span><span class="s5">按鼠标左键选择梁图元<s>,</s>按右键或<s>ESC</s>退出<s>;</s>可以通过回车键及<s>shift+"</s>→←↑<s>"</s>光标键在跨之间、上下输入框之间进行切换</span><span class="s6"><s>45 FPS</s></span>
</footer>

<footer class="taskbar">
  <button class="start" aria-label="开始"><svg viewBox="0 0 16 16"><path d="M0 2.300l7-1v6.200H0zM8 1.200L16 0v7.500H8zM0 8.500h7v6.200l-7-1zM8 8.500h8V16l-8-1.200z" fill="#fff"/></svg></button>
  <label class="search">
    <svg class="cort" viewBox="0 0 22 22"><circle cx="11" cy="11" r="9" fill="none" stroke="#fff" stroke-width="2.500"/></svg>
    <input type="text" placeholder="在这里输入你要搜索的内容">
    <svg class="mic" viewBox="0 0 12 18"><rect x="3.500" y="1.500" width="5" height="10" fill="none" stroke="#999"/><path d="M1 9v4h10V9M6 13v4M3 16.500h6" fill="none" stroke="#999"/></svg>
  </label>
  <button class="tv" aria-label="任务视图"><svg viewBox="0 0 22 22"><path d="M5.500 4.500h11v13h-11zM3 5.500H1.500v11H3M19 5.500h1.500v11H19" fill="none" stroke="#fff" stroke-width="1.300"/></svg></button>
  <div class="pins">
    <button aria-label="应用"><svg viewBox="0 0 24 24"><g fill="#e6e6e6"><path d="M11 11Q2 13 2 7t6-5q5 1 3 9z"/><path d="M13 11Q11 2 17 2t5 6q-1 5-9 3z"/><path d="M13 13q9-2 9 4t-6 5q-5-1-3-9z"/><path d="M11 13q2 9-4 9t-5-6q1-5 9-3z"/></g><path d="M5 6q4-1 6 5M18 5q1 4-5 6M19 18q-4 1-6-5M6 19q-1-4 5-6" fill="none" stroke="#222"/></svg></button>
    <button class="ie-w" aria-label="浏览器"><svg viewBox="0 0 24 24"><use href="#k-ie"/></svg></button>
    <button aria-label="提醒"><svg viewBox="0 0 26 24"><circle cx="10" cy="14" r="8.500" fill="none" stroke="#aaa" stroke-width="1.500"/><path d="M14 10q-6-3-8 2t3 7q5 1 5-4-1-2-4-1" fill="none" stroke="#ccc" stroke-width="1.500"/><path d="M20 0q4 1 4 6v3l2 2H14l2-2V6q0-5 4-6z" fill="#f0b41e"/><path d="M18 11h4l-2 2z" fill="#f0b41e"/></svg></button>
  </div>
  <i class="bars"></i>
  <div class="apps">
    <button aria-label="Edge"><svg viewBox="0 0 24 24"><use href="#k-edge"/></svg></button>
    <button class="ie-b" aria-label="Internet Explorer"><svg viewBox="0 0 24 24"><use href="#k-ie"/></svg></button>
    <button class="run" aria-label="文件资源管理器"><svg viewBox="0 0 24 24"><path d="M2 4h7l1 2h12v15H2z" fill="#f6cf67"/><path d="M2 8h20v13H2z" fill="#ffe69a"/><path d="M5 21v-9h14v9h-4v-4H9v4z" fill="#38a9e4"/></svg></button>
    <button class="run" aria-label="广联达"><svg viewBox="0 0 24 24"><path d="M22 1q-2 3-6 3Q2 3 1 13q0 9 10 10 9 0 11-8l-1-4q-3-2-8-1 6 2 3 6-5 3-8-2-1-6 6-7 7 1 8-6z" fill="#159be6"/></svg></button>
    <button class="run ie-g" aria-label="安全浏览器"><svg viewBox="0 0 24 24"><circle cx="12" cy="12" r="10" fill="#56b52e"/><use href="#k-ie"/></svg></button>
    <button class="run" aria-label="记事"><svg viewBox="0 0 24 24"><rect width="24" height="24" rx="2" fill="#f59a1b"/><path d="M2 5l16-2 3 16-14 3z" fill="#fffbe8"/><path d="M5 9l9-1M5 12l7-1M6 15l5-1" stroke="#b07824"/><path d="M10 18l9-14" stroke="#865018" stroke-width="2.500"/></svg></button>
    <button class="run act" aria-label="GGJ2013"><svg viewBox="0 0 16 16"><use href="#logo"/></svg></button>
  </div>
  <i class="bars"></i>
  <span class="link">链接</span>
  <div class="two"><span>24%</span><span>CPU使用</span></div>
  <div class="tray">
    <svg viewBox="0 0 20 20"><path d="M4 13l6-6 6 6" fill="none" stroke="#fff" stroke-width="1.400"/></svg>
    <svg viewBox="0 0 20 20"><path d="M7 6.500h10v7H7zM18 8.500v3M2 7h4M2 9h4M3 5v2M5 5v2M4 10v3h3" fill="none" stroke="#fff" stroke-width="1.300"/><path d="M9 8.500h6v3H9z" fill="#fff"/></svg>
    <svg viewBox="0 0 20 20"><path d="M3 15Q3 4 17 4M7 16Q7 8 17 8M11 16q0-4 6-4" fill="none" stroke="#bbb" stroke-width="1.500"/><circle cx="15" cy="15" r="2" fill="#fff"/></svg>
    <svg viewBox="0 0 20 20"><path d="M2 8h3l4-4v12l-4-4H2z" fill="none" stroke="#fff" stroke-width="1.300"/><path d="M12 7q2 3 0 6M14.500 5.500q3 4.500 0 9M17 4q4 6 0 12" fill="none" stroke="#ccc" stroke-width="1.200"/></svg>
    <svg class="kb" viewBox="0 0 24 20"><rect x="1" y="4" width="22" height="12" fill="none" stroke="#fff" stroke-width="1.400"/><path d="M3 7h18M3 10h18M6 13h12" stroke="#fff" stroke-width="1.300" stroke-dasharray="2 1"/></svg>
    <span>中</span>
    <svg viewBox="0 0 26 27"><path d="M1 4l19-4q4 0 5 3l1 17q0 4-3 5L8 27q-4 0-4-4z" fill="url(#g-red)"/><path d="M20 7q-11-3-12 2 0 3 6 4 6 2 5 5-2 4-12 1" fill="none" stroke="#fff" stroke-width="4"/></svg>
  </div>
  <div class="two clock"><span>17:55</span><span>2018/5/10</span></div>
  <button class="note" aria-label="操作中心"><svg viewBox="0 0 18 18"><path d="M1.500 2.500h15v11H12l-3 3-2-3H1.500z" fill="none" stroke="#fff" stroke-width="1.300"/></svg></button>
</footer>

<div class="callout c1"></div>
<div class="callout c2"></div>
<div class="callout c3"></div>
</body>
</html>
```
FILE: styles.css
```css
* { box-sizing: border-box; }
body {
  margin: 0; height: 100vh; min-height: 600px; display: flex; flex-direction: column;
  position: relative; overflow: hidden; background: #f0f0f0; color: #000;
  font: 12px/16px "Open Sans", "Noto Sans CJK SC", sans-serif;
}
button, input, select { font: inherit; color: inherit; margin: 0; padding: 0; border: 0; background: none; border-radius: 0; }
button { white-space: nowrap; }
svg { display: block; flex: none; }
s { text-decoration: none; font-family: "Liberation Mono", monospace; font-size: 10px; white-space: pre; }
.defs { position: absolute; width: 0; height: 0; }
.ic { width: 16px; height: 16px; }

.titlebar { position: relative; flex: none; height: 23px; display: flex; align-items: center; gap: 5px; padding-left: 2px; background: #fff; }
.titlebar h1 { margin: 0; flex: 1; font-size: 12px; font-weight: 400; white-space: nowrap; }
.titlebar h1 span { font-family: Roboto, sans-serif; font-size: 13px; }
.winctl { display: flex; }
.winctl button { width: 46px; height: 22px; display: grid; place-items: center; }
.winctl svg { width: 12px; height: 12px; }
.orb { position: absolute; left: 855px; top: 0; width: 48px; height: 4px; border-radius: 0 0 24px 24px; background: #4cc55c; }
.ime { position: absolute; left: 702px; top: 3px; width: 206px; height: 24px; padding: 0 4px 0 2px; display: flex; align-items: center; justify-content: space-between; background: #fdfeff; border: 1px solid #a9bccf; z-index: 2; }
.ime svg { width: 16px; height: 16px; }
.ime .sogou { width: 26px; height: 27px; margin: -4px 4px 0 -4px; }
.ime b { font-size: 15px; color: #1f6fc0; }

.menubar { flex: none; height: 30px; display: flex; gap: 2px; padding: 1px 0 1px 7px; }
.menus, .account, .extras { display: flex; align-items: center; gap: 10px; }
.menus { width: 779px; gap: 0; justify-content: space-between; margin-right: -7px; }
.extras { width: 150px; margin-left: 12px; gap: 7px; }
.tip { width: 187px; display: flex; align-items: center; justify-content: center; color: #2e6b00; text-decoration: none; background: #f7f7f7; border-radius: 3px; white-space: nowrap; }
.account { flex: 1; padding: 0 6px 0 4px; background: #f7f7f7; }
.bell { width: 14px; height: 16px; }
.tb { display: inline-flex; align-items: center; gap: 4px; }
.drop { display: inline-flex; align-items: center; }
.drop::after { content: ""; border: 3px solid transparent; border-top-color: #000; border-bottom-width: 0; margin-left: 2px; }
.drop:not(.tb)::after { margin-left: 6px; }
.tight::after { margin-left: -2px; }
.off { color: #808080; }
.white { background: #fff; height: 24px; padding-right: 4px; margin-right: -3px; }
.more { margin-left: auto; align-self: flex-start; font-size: 16px; line-height: 14px; }

.toolrow { flex: none; display: flex; gap: 3px; min-height: 28px; }
.bar { display: flex; align-items: center; gap: 7px; padding: 0 5px 0 4px; background: linear-gradient(#fbfbfb, #f3f3f3); border-radius: 3px; }
.first { height: 31px; padding-bottom: 2px; }
.file { width: 150px; gap: 8px; }
.calc { width: 548px; }
.view { flex: 1; padding-left: 3px; }
.grow { flex: 1; }
.stub { width: 32px; }
.sep { flex: none; width: 1px; height: 15px; margin-right: -2px; background: #bcbcbc; }
.grip { flex: none; width: 3px; height: 16px; margin-right: -3px; background: repeating-linear-gradient(#b8b8b8 0 2px, transparent 2px 4px); }
.combos { display: flex; gap: 3px; margin: 0 -2px; }
.combo { position: relative; width: 69px; height: 23px; background: #fff; }
.combo.short { width: 57px; }
.combo.inset { margin: 0 -3px; }
.combo select { appearance: none; width: 100%; height: 100%; padding: 0 16px 0 2px; line-height: 20px; overflow: hidden; text-overflow: clip; }
.combo::after { content: ""; position: absolute; right: 3px; top: 11px; border: 3px solid transparent; border-top-color: #000; border-bottom-width: 0; pointer-events: none; }
.pressed { height: 24px; padding: 0 3px; margin: 0 -4px; border: 1px solid #0078d7; background: #dcebf8; }
.pressed.wide { position: relative; margin-right: 8px; }
.pressed.wide::after { position: absolute; right: -9px; }

.main { flex: 1; min-height: 0; display: flex; gap: 5px; }
.side { flex: none; width: 165px; display: flex; flex-direction: column; }
.side-title { flex: none; height: 15px; display: flex; align-items: center; background: #0054e3; color: #fff; }
.side-title span { flex: 1; }
.side-title button { width: 18px; }
.side-title svg { width: 10px; height: 10px; }
.side-btn { flex: none; height: 22px; border: 1px solid #9c9c9c; border-top-color: #fff; background: #f0f0f0; }
.side-title + .side-btn { margin-top: 2px; }
.side-tools { flex: none; height: 27px; display: flex; gap: 3px; align-items: center; padding: 0 6px; border-left: 2px solid #888; border-right: 1px solid #aaa; background: #f7f7f7; }
.side-tools svg { width: 18px; height: 18px; }
.tree { flex: 1; min-height: 0; display: flex; flex-direction: column; margin: 0 1px 2px 2px; border: 1px solid #828790; background: #fff; }
.tree-main { flex: 1; min-height: 0; display: flex; }
.tree ul { list-style: none; margin: 0; padding: 0; }
.tree .roots { flex: 1; min-width: 0; overflow: hidden; white-space: nowrap; padding-top: 1px; }
.roots > li { position: relative; }
.node { display: flex; gap: 4px; align-items: center; height: 16px; padding-left: 23px; position: relative; }
.node::before { content: ""; position: absolute; left: 7px; top: 5px; width: 6px; height: 6px; border: solid #a0a0a0; border-width: 2px 2px 0 0; transform: rotate(45deg); }
.node.open::before { left: 8px; top: 3px; border-color: #333; border-width: 0 2px 2px 0; }
.tree .roots li ul { margin-left: 12px; border-left: 1px dotted #808080; padding-left: 18px; }
.roots ul li { display: flex; align-items: center; height: 16px; padding-left: 12px; position: relative; }
.roots ul li::before { content: ""; position: absolute; left: 0; top: 0; width: 10px; height: 8px; border: dotted #808080; border-width: 0 0 1px 1px; }
.roots ul li::after { content: ""; position: absolute; left: 0; top: 8px; height: 8px; border-left: 1px dotted #808080; }
.roots ul li:last-child::after { display: none; }
.roots ul .ic { margin-right: 4px; }
.roots .on { width: 68px; background: linear-gradient(90deg, #fff 10px, #d9d9d9 10px); }
.vs, .hs { flex: none; display: flex; align-items: center; background: #f0f0f0; }
.vs { width: 16px; flex-direction: column; }
.hs { height: 16px; }
.vs b, .hs b { background: #cdcdcd; }
.vs b { width: 15px; }
.hs b { height: 15px; }
.ch { flex: none; width: 16px; height: 16px; display: grid; place-items: center; }
.ch::before { content: ""; width: 6px; height: 6px; border: solid #555; border-width: 2px 0 0 2px; transform: rotate(45deg); }
.ch.right::before { transform: rotate(135deg); }
.ch.down::before { transform: rotate(225deg); }
.ch.left::before { transform: rotate(-45deg); }
.ch.down, .ch.right { margin-left: auto; }
.vs .ch.down { margin: auto 0 0; }
.tree .vs b { height: 300px; }
.tree .hs b { width: 102px; margin-left: 2px; }
.tree .hs .right { margin-right: 18px; }

.work { flex: 1; min-width: 0; display: flex; flex-direction: column; }
.cad { flex: 1; min-height: 0; width: 100%; }
.cadtext { fill: #d4d4d4; font: 14px "DejaVu Sans Mono", monospace; }
.cadtext .mid { text-anchor: middle; }
.cadtext .small { fill: #a090a8; font: 8px "Noto Sans CJK SC", sans-serif; }
.work .snap { height: 32px; padding: 1px 0 3px; gap: 1px; }
.snap .offs { padding-left: 3px; }
.spin { display: flex; align-items: center; gap: 2px; color: #777; margin-left: -3px; }
.spin + .spin { margin-left: -1px; }
.spin span { position: relative; width: 58px; height: 23px; }
.spin.big { margin-left: -4px; }
.spin.big span { width: 68px; }
.spin input { width: 100%; height: 100%; padding-right: 18px; border: 1px solid #777; background: #f3f3f3; color: #777; text-align: right; }
.spin span::before, .spin span::after { content: ""; position: absolute; right: 5px; border: 3px solid transparent; }
.spin span::before { top: 1px; border-bottom-color: #555; }
.spin span::after { bottom: 1px; border-top-color: #555; }
.rotate { display: flex; align-items: center; gap: 9px; margin-left: -3px; }
.rotate input { appearance: none; width: 11px; height: 11px; border: 1px solid #aaa; background: #f7f7f7; }

.dock { flex: none; height: 201px; display: flex; }
.dock-grip { width: 12px; padding: 2px 1px 0; background: radial-gradient(circle at 2px 2px, #b5b5b5 1px, transparent 1px) 2px 14px / 5px 5px repeat-y, radial-gradient(circle at 2px 2px, #b5b5b5 1px, transparent 1px) 7px 14px / 5px 5px repeat-y; }
.dock-grip svg { width: 10px; height: 10px; }
.dock-body { flex: 1; min-width: 0; display: flex; flex-direction: column; }
.spanbar { height: 26px; margin: 2px 0 0; padding-left: 5px; }
.off + .txt { margin-left: 2px; }
.txt { margin-left: 3px; }
.grid { flex: 1; min-height: 0; margin-right: 1px; display: flex; flex-direction: column; border: 1px solid #a0a0a0; background: #f0f0f0; }
.grid-main { flex: 1; min-height: 0; display: flex; }
.grid-clip { flex: 1; min-width: 0; overflow: hidden; }
.grid .vs b { height: 65px; }
.grid .vs { width: 17px; }
.grid .hs b { width: 432px; margin-left: auto; margin-right: 133px; }
.grid .hs .right { margin-left: 0; margin-right: 18px; }
.grid .hs { height: 18px; }
table { width: 100%; table-layout: fixed; border-collapse: separate; border-spacing: 0; background: #fff; }
.w32 { width: 32px; } .w41 { width: 41px; } .w82 { width: 82px; } .w81 { width: 81px; } .w80 { width: 80px; } .w101 { width: 101px; } .w71 { width: 71px; } .w184 { width: 184px; }
th, td { height: 19px; padding: 0 0 0 1px; border: solid #c0c0c0; border-width: 0 1px 1px 0; font-weight: 400; overflow: hidden; white-space: nowrap; line-height: 17px; }
th { padding: 0; background: linear-gradient(#fdfdfd, #f0f0f0); }
th.cur { background: linear-gradient(#f8d8a0, #f0bf60); color: #6a0a5a; }
th.cut { text-align: left; padding-left: 7px; text-overflow: clip; }
td, tbody th { font-family: "Liberation Mono", monospace; font-size: 10px; }
td b { display: inline-block; width: 12px; font: 12px/12px "DejaVu Sans", sans-serif; text-align: center; }
tbody td:nth-child(2) { border-right-color: #000; }
.k { display: inline-block; width: 12px; height: 12px; vertical-align: middle; }
.sel td { background: #a6caf0; }
.sel th { background: #ffd48c; color: #6a0a5a; }
td.edit { overflow: visible; padding: 0; }
.edit div { display: flex; height: 20px; margin: -1px; border: 2px solid #000; background: #cfe0f5; }
.edit input { flex: 1; min-width: 0; border-left: 1px solid #000; margin: 2px 0 2px 2px; }
.edit button { width: 15px; height: 15px; border: 1px solid #bbb; background: #e4e4e4; font-family: "Liberation Sans", sans-serif; font-size: 14px; font-weight: 700; line-height: 13px; }

.status { flex: none; height: 22px; display: flex; gap: 3px; padding-top: 2px; }
.status span { padding: 0 1px; border: 1px solid #cfcfcf; background: #f7f7f7; white-space: nowrap; overflow: hidden; line-height: 18px; }
.s1 { width: 147px; } .s2 { width: 77px; } .s3 { width: 97px; } .s4 { width: 47px; } .s5 { flex: 1; min-width: 0; } .s6 { width: 70px; }

.taskbar { flex: none; height: 40px; display: flex; align-items: stretch; background: linear-gradient(90deg, #000 28%, #041012 60%, #00060a); color: #fff; }
.taskbar button { display: grid; place-items: center; }
.start { width: 48px; }
.start svg { width: 16px; height: 16px; }
.search { width: 344px; display: flex; align-items: center; gap: 5px; padding: 0 14px 0 9px; background: #333; }
.search input { flex: 1; min-width: 0; font-size: 14px; }
.search input::placeholder { color: #9a9a9a; opacity: 1; }
.cort { width: 22px; height: 22px; }
.mic { width: 12px; height: 18px; }
.tv { width: 48px; }
.tv svg { width: 22px; height: 22px; }
.pins { width: 157px; display: flex; }
.pins button, .apps button { flex: 1; }
.pins svg, .apps svg { width: 24px; height: 24px; }
.bars { flex: none; width: 5px; height: 16px; margin: 12px 13px 0 3px; border: solid #444; border-width: 0 1px; }
.apps { width: 304px; display: flex; gap: 2px; margin-left: -2px; }
.run { border-bottom: 2px solid #76b9ed; }
.taskbar .run { border-bottom: 2px solid #76b9ed; }
.act { background: #2f393e; }
.ie-w { color: #eee; --ring: #ddd; }
.taskbar .ie-b { color: #3ca4ea; --ring: #f3b92b; }
.ie-g { color: #fff; --ring: #d9f3c0; }
.apps + .bars { margin-right: 10px; margin-left: 14px; }
.link { align-self: center; }
.two { width: 86px; display: flex; flex-direction: column; align-items: center; justify-content: center; line-height: 17px; }
.tray { display: flex; align-items: center; gap: 4px; flex: 1; justify-content: space-between; padding: 0 14px 0 0; }
.tray svg { width: 18px; height: 18px; }
.tray .kb { width: 24px; }
.clock { width: 90px; }
.note { width: 30px; margin-right: 16px; }
.note svg { width: 18px; height: 18px; }

.callout { position: absolute; border: 7px solid #f00; pointer-events: none; }
.c1 { left: 735px; top: 532px; width: 202px; height: 46px; }
.c2 { left: 939px; top: 515px; width: 163px; height: 65px; }
.c3 { left: 744px; top: 617px; width: 331px; height: 56px; }
```
